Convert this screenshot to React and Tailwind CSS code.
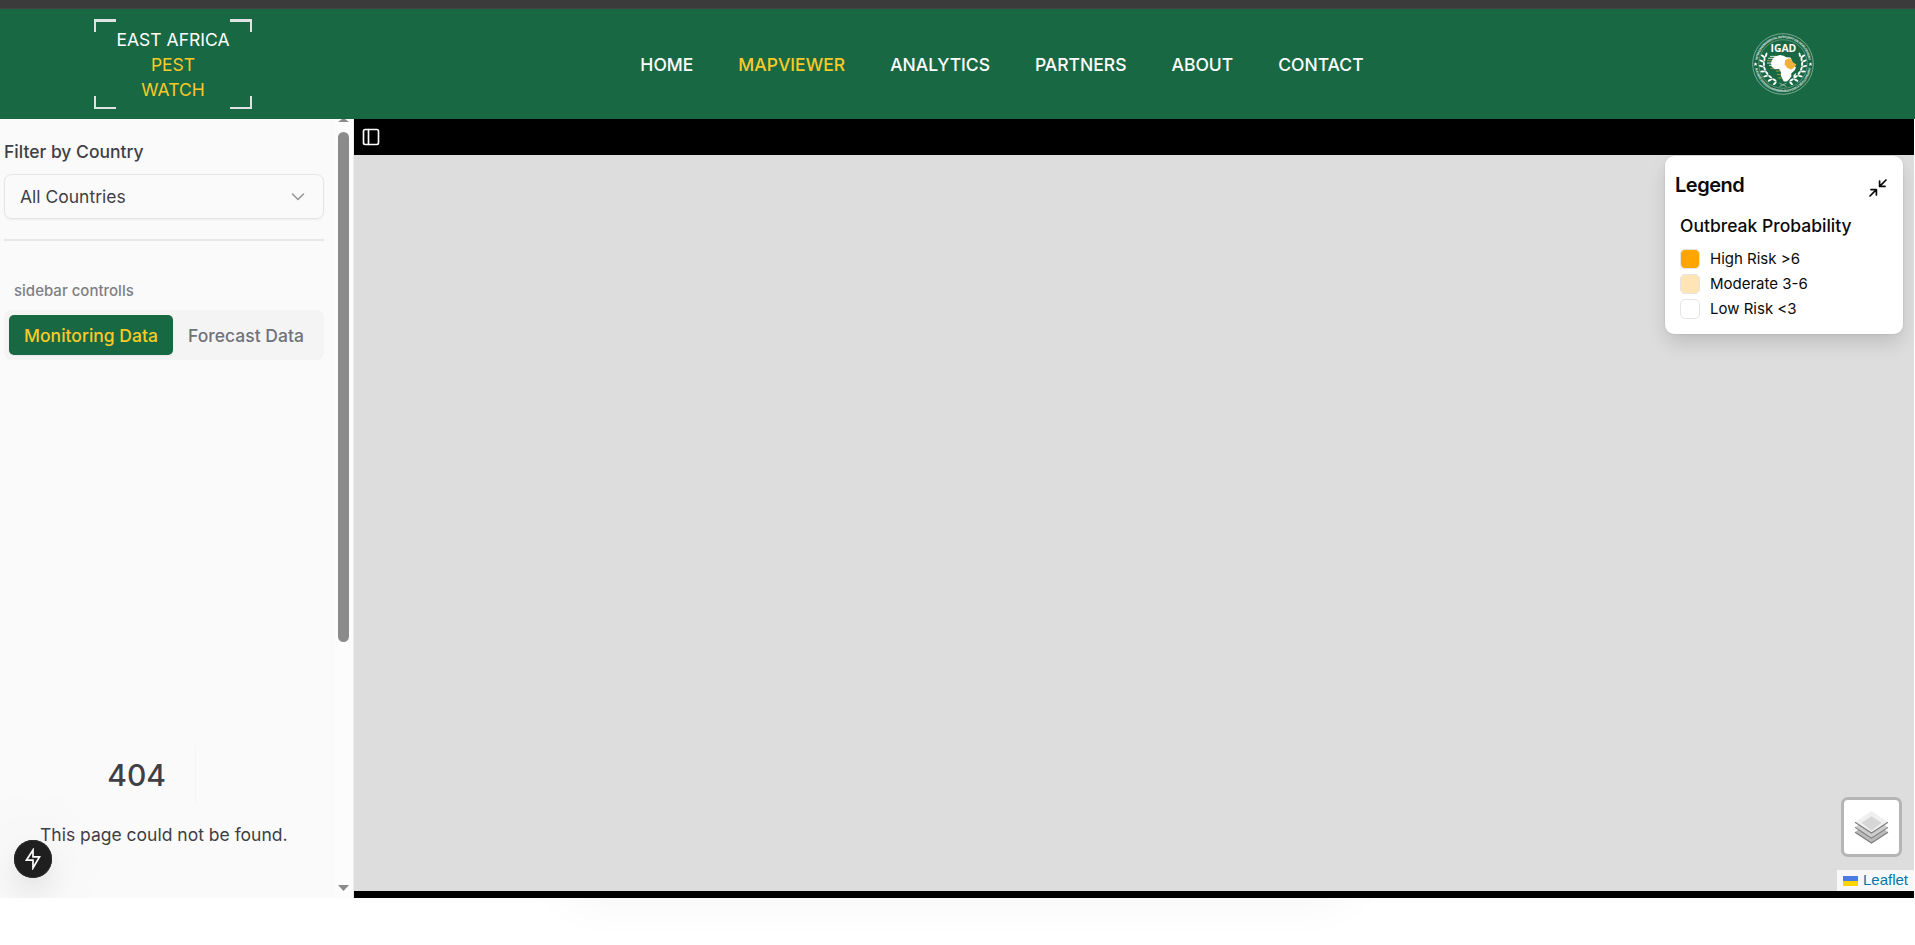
import React from "react";

const NAV = [
  { label: "HOME" },
  { label: "MAPVIEWER", active: true },
  { label: "ANALYTICS" },
  { label: "PARTNERS" },
  { label: "ABOUT" },
  { label: "CONTACT" },
];

const LEGEND = [
  { label: "High Risk >6", swatch: "bg-[#ffa500]" },
  { label: "Moderate 3-6", swatch: "bg-[#ffe4b5]" },
  { label: "Low Risk <3", swatch: "bg-white" },
];

function Brand() {
  const corner = "absolute h-[13px] w-[22px] border-[#dfe3e3]";
  return (
    <div className="relative ml-[94px] h-[90px] w-[158px] pt-[8px] text-center text-[17.5px] leading-[25px] text-white">
      <span className={`${corner} left-0 top-0 border-l-2 border-t-3`} />
      <span className={`${corner} right-0 top-0 border-r-2 border-t-3`} />
      <span className={`${corner} bottom-0 left-0 border-b-2 border-l-2`} />
      <span className={`${corner} bottom-0 right-0 border-b-2 border-r-2`} />
      <div>EAST AFRICA</div>
      <div className="text-[#fbc926]">PEST</div>
      <div className="text-[#fbc926]">WATCH</div>
    </div>
  );
}

function LaurelSide() {
  const leaves = [
    [12.6, 22.5, 70], [11, 27, 60], [10.6, 32, 50], [11.6, 37, 35], [14.2, 41.5, 20], [18, 45.5, 5], [22.6, 48.5, -10],
  ];
  return (
    <g fill="#fff">
      {leaves.map(([x, y, a]) => (
        <g key={y} transform={`translate(${x} ${y}) rotate(${a})`}>
          <ellipse cx="-1" cy="-1.4" rx="2.4" ry="1" transform="rotate(35)" />
          <ellipse cx="-1" cy="1.4" rx="2.4" ry="1" transform="rotate(-35)" />
        </g>
      ))}
    </g>
  );
}

function IgadLogo() {
  return (
    <svg viewBox="0 0 62 62" className="h-[62px] w-[62px]" fontFamily="Open Sans, sans-serif">
      <defs>
        <path id="ringTop" d="M5.1 31 A25.9 25.9 0 0 1 56.9 31" />
        <path id="ringBottom" d="M3 31 A28 28 0 0 0 59 31" />
      </defs>
      <circle cx="31" cy="31" r="30.3" fill="none" stroke="#fff" strokeWidth="0.6" opacity="0.7" />
      <circle cx="31" cy="31" r="24.3" fill="none" stroke="#fff" strokeWidth="0.5" opacity="0.55" />
      <text fontSize="3.1" fontWeight="700" fill="#fff" opacity="0.85">
        <textPath href="#ringTop" startOffset="4" textLength="73" lengthAdjust="spacing">
          INTERGOVERNMENTAL AUTHORITY ON DEVELOPMENT
        </textPath>
      </text>
      <text fontSize="2.9" fontWeight="700" fill="#fff" opacity="0.85">
        <textPath href="#ringBottom" startOffset="4" textLength="80" lengthAdjust="spacing">
          AUTORITÉ INTERGOUVERNEMENTALE POUR LE DÉVELOPPEMENT
        </textPath>
      </text>
      <path fill="#fff" d="M3.5 29.2l.6 1.3 1.4.1-1.1.9.4 1.4-1.3-.8-1.2.8.3-1.4-1-.9 1.4-.1zM58.5 29.2l.6 1.3 1.4.1-1.1.9.4 1.4-1.3-.8-1.2.8.3-1.4-1-.9 1.4-.1z" />
      <text x="31.4" y="19.2" textAnchor="middle" fontSize="10.4" fontWeight="700" fill="#fff">IGAD</text>
      <LaurelSide />
      <g transform="translate(62 0) scale(-1 1)"><LaurelSide /></g>
      <path d="M27.5 53.5l7-3.3M34.5 53.5l-7-3.3" stroke="#fff" strokeWidth="0.6" opacity="0.8" />
      <path
        fill="#fff"
        d="M23 23.6L28 22L31.5 22.8L34.5 24.2L38.5 24.6L40 28L41.5 32L44 34.6L42.5 37.4L39.2 40.4L39.4 43.4L37 46.4L34.8 48.4L31.8 48.6L30.2 45.6L28.8 42.4L28.9 39L27 36L22.6 36.2L19.6 33.6L19 29.6L20.8 25.8Z"
      />
      <path fill="#fff" d="M44.2 39.8L43.4 43.6L41.6 45L41.4 42.2Z" />
      <path fill="#f0b13c" d="M33.2 27.2L36.2 25.4L39.2 25.8L40.6 29L44.4 31.4L42.2 34.6L39.4 36.4L35.6 35.2L32.6 31.6Z" />
      <path stroke="#fff" strokeWidth="0.8" d="M16 25.3h8M18 23.4h7M15 30h7M17 32.4h6" />
      <path stroke="#f0b13c" strokeWidth="0.6" d="M15 27.6h5M18.5 35.4h4M24 38h4.6M25 41.5h3.6M26 45h3.6" />
    </svg>
  );
}

function PanelIcon() {
  return (
    <svg viewBox="0 0 24 24" className="h-5 w-5" fill="none" stroke="#fff" strokeWidth="2" strokeLinecap="round" strokeLinejoin="round">
      <rect width="18" height="18" x="3" y="3" rx="2" />
      <path d="M9 3v18" />
    </svg>
  );
}

function LayersIcon() {
  const sheet = "M1 11 L17.5 22 L34 11 L17.5 0 Z";
  return (
    <svg viewBox="0 0 35 33" className="h-[33px] w-[35px]">
      <g transform="translate(0 10)"><path d={sheet} fill="#b9b9b9" /><path d="M1 11.2 L17.5 22 L34 11.2" fill="none" stroke="#7c7c7c" strokeWidth="1.1" /></g>
      <g transform="translate(0 5.2)"><path d={sheet} fill="#cdcdcd" /><path d="M1 11.2 L17.5 22 L34 11.2" fill="none" stroke="#7c7c7c" strokeWidth="1.1" /></g>
      <path d={sheet} fill="#f0f0f0" />
      <path d="M7.5 11.8 L17.5 5.2 L27.5 11.8 L17.5 19.8 Z" fill="#d6d6d6" />
      <path d="M1 11.2 L17.5 22 L34 11.2" fill="none" stroke="#7c7c7c" strokeWidth="1.1" />
    </svg>
  );
}

function Header() {
  return (
    <header className="flex h-[110px] shrink-0 items-center justify-between bg-[#196844]">
      <Brand />
      <nav className="flex gap-[45px] text-[17.5px] font-medium leading-[25px] text-white">
        {NAV.map((n) => (
          <a key={n.label} className={n.active ? "text-[#fbc926]" : ""}>{n.label}</a>
        ))}
      </nav>
      <div className="mr-[101px]"><IgadLogo /></div>
    </header>
  );
}

function Sidebar() {
  return (
    <aside className="relative flex w-[354px] shrink-0 bg-[#fafafa]">
      <div className="flex w-[334px] flex-col pl-1 pr-[10px] text-[#3f3f46]">
        <div className="mt-5 text-[17.5px] font-medium leading-[25px]">Filter by Country</div>
        <div className="mt-[10px] flex h-[45px] items-center justify-between rounded-[7.5px] border border-[#e4e4e7] pl-[15px] pr-[15px] pt-px text-[17.5px] shadow-xs">
          <span>All Countries</span>
          <svg viewBox="0 0 20 20" className="h-5 w-5" fill="none" stroke="#98989c" strokeWidth="1.6" strokeLinecap="round" strokeLinejoin="round">
            <path d="M4.5 7l5.5 5.5L15.5 7" />
          </svg>
        </div>
        <div className="mt-5 h-[2px] bg-[#e7e7e9]" />
        <div className="mt-10 pl-[10px] text-[15px] font-medium leading-5 text-[#7f7f84]">sidebar controlls</div>
        <div className="mt-[9px] flex h-[50px] items-center rounded-[7.5px] bg-[#f4f4f5] px-[5px] text-[17.5px] font-medium">
          <div className="flex h-[40px] w-[164px] items-center justify-center rounded-[5px] bg-[#196844] pt-[2px] text-[#fbc926] shadow-xs">Monitoring Data</div>
          <div className="flex h-[40px] w-[146px] items-center justify-center pt-[2px] text-[#71717a]">Forecast Data</div>
        </div>
        <div className="mt-[385px] flex h-[59px] items-center">
          <h1 className="flex h-full w-[192px] items-center justify-end border-r border-[#f5f5f6] pr-[29px] text-[30px] font-medium leading-none">404</h1>
        </div>
        <p className="mt-[13px] pl-[36px] text-[17.5px] leading-[35px]">This page could not be found.</p>
      </div>
      <div className="flex w-[20px] flex-col items-center border-r border-[#ececec] bg-[#fcfcfc]">
        <svg className="h-[13px] w-[11px]" viewBox="0 0 11 13"><path d="M0 3 L4 0 H7 L11 3Z" fill="#8b8b8b" /></svg>
        <div className="h-[510px] w-[11px] rounded-full bg-[#8b8b8b]" />
        <svg className="mt-auto mb-[7px] h-[6px] w-[11px]" viewBox="0 0 11 6"><path d="M0 0H11L5.5 6Z" fill="#8b8b8b" /></svg>
      </div>
      <div className="absolute inset-0 overflow-hidden">
        <div className="absolute bottom-5 left-[14px] flex h-[38px] w-[38px] items-center justify-center rounded-full bg-[#1f1f20] shadow-[inset_0_0_0_1px_#2c2c2d,0_16px_32px_-8px_rgba(0,0,0,.24),0_0_80px_rgba(0,0,0,.12)]">
          <svg viewBox="0 0 16 22" className="h-[22px] w-4" fill="none" stroke="#fff" strokeWidth="1.7" strokeLinejoin="miter">
            <path d="M8 2 L1.4 12.2 H8 V20 L14.6 8.8 H8 Z" />
          </svg>
        </div>
      </div>
    </aside>
  );
}

function Legend() {
  return (
    <div className="absolute right-[11px] top-[1px] flex h-[178px] w-[238px] flex-col rounded-[9px] bg-white px-[10px] text-[#0a0a0a] shadow-[0_10px_20px_-2px_rgba(0,0,0,.15),0_0_2px_rgba(0,0,0,.15)]">
      <div className="mt-[14px] flex h-[32px] justify-between pr-[5px]">
        <h2 className="text-[20px] font-semibold leading-[30px] tracking-[-0.5px]">Legend</h2>
        <svg viewBox="0 0 20 20" className="mt-[8px] h-5 w-5" fill="none" stroke="#0a0a0a" strokeWidth="1.7" strokeLinecap="round" strokeLinejoin="round">
          <path d="M11.6 3.2V8.4H17M11.9 8.1L18 2M3 11.6H8.4V17M8.1 11.9L2 18" />
        </svg>
      </div>
      <h3 className="mt-[11px] pl-[5px] text-[17.5px] font-medium leading-[25px]">Outbreak Probability</h3>
      <ul className="mt-[8px] pl-[5px] text-[15px] leading-[25px]">
        {LEGEND.map((l) => (
          <li key={l.label} className="flex h-[25px] items-center gap-[10px]">
            <span className={`h-5 w-5 rounded-[5px] border border-[#e4e4e7] ${l.swatch}`} />
            {l.label}
          </li>
        ))}
      </ul>
    </div>
  );
}

function MapArea() {
  return (
    <section className="flex min-w-0 flex-1 flex-col bg-black pb-[7px]">
      <div className="flex h-9 shrink-0 items-center pl-[7px]"><PanelIcon /></div>
      <div className="relative flex-1 bg-[#ddd]">
        <Legend />
        <div className="absolute bottom-[34px] right-[12px] flex h-[60px] w-[61px] items-center justify-center rounded-[7px] border-[3px] border-[#b5b5b5] bg-white">
          <LayersIcon />
        </div>
        <div className="absolute bottom-0 right-0 flex h-[21px] w-[77px] items-center gap-[5px] bg-[#f8f8f8] pl-[6px] text-[15px] text-[#0078a8] [font-family:'Liberation_Sans',Arial,sans-serif]">
          <span className="flex h-[10px] w-[15px] flex-col"><i className="flex-1 bg-[#4c7be1]" /><i className="flex-1 bg-[#ffd500]" /></span>
          Leaflet
        </div>
      </div>
    </section>
  );
}

export default function App() {
  return (
    <div className="flex h-[945px] w-[1915px] flex-col overflow-hidden bg-white [font-family:Inter,sans-serif]">
      <div className="h-[9px] shrink-0 border-b border-[#434644] bg-[#3b3b3b]" />
      <Header />
      <main className="flex h-[779px] shrink-0 pr-px">
        <Sidebar />
        <MapArea />
      </main>
      <div className="relative h-[47px] overflow-hidden bg-white">
        <div className="absolute -top-[80px] left-[575px] h-[65px] w-[765px] rounded-[20px] shadow-[0_0_50px_15px_rgba(0,0,0,.05)]" />
      </div>
    </div>
  );
}
